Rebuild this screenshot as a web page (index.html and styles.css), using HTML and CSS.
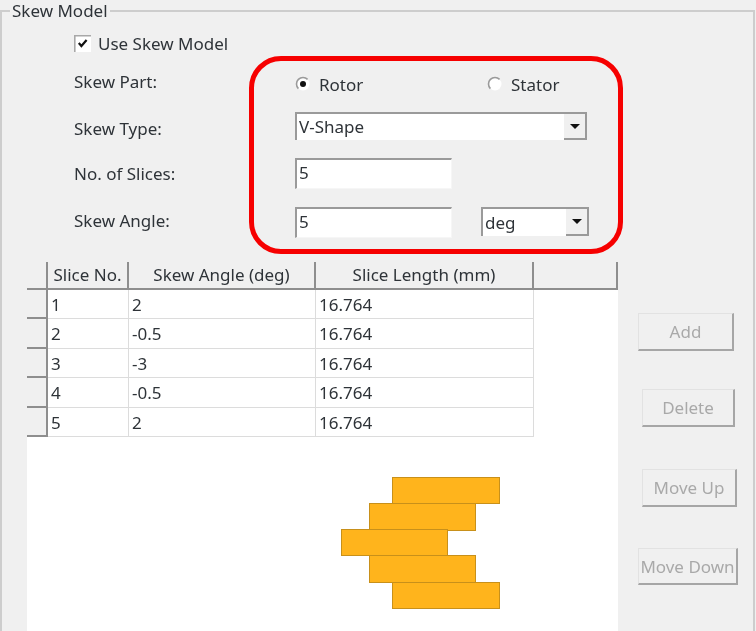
FILE: index.html
```html
<!DOCTYPE html>
<html lang="en">
<head>
<meta charset="utf-8">
<title>Skew Model</title>
<link rel="stylesheet" href="styles.css">
</head>
<body>
<div class="window">
  <fieldset class="group">
    <legend class="group-title">Skew Model</legend>
    <label class="use-skew">
      <svg class="checkbox" width="17" height="17" viewBox="0 0 17 17"><rect x="0" y="0" width="17" height="17" fill="#fff"/><path d="M.8 17V.8H17" fill="none" stroke="#a8a8a8" stroke-width="1.6"/><path d="M4.8 8 7.4 11 12.6 5" fill="none" stroke="#111" stroke-width="2.2"/></svg>
      Use Skew Model
    </label>
    <div class="form">
      <span class="label label-part">Skew Part:</span>
      <div class="radios">
        <span class="radio radio-rotor">
          <svg width="16" height="16" viewBox="0 0 16 16"><circle cx="8" cy="8" r="6.5" fill="#fff"/><path d="M3.4 12.6A6.5 6.5 0 0 1 12.6 3.4" fill="none" stroke="#9a9a9a" stroke-width="1.6"/><circle cx="8" cy="8" r="3" fill="#111"/></svg>
          Rotor
        </span>
        <span class="radio">
          <svg width="16" height="16" viewBox="0 0 16 16"><circle cx="8" cy="8" r="6.5" fill="#fff"/><path d="M3.4 12.6A6.5 6.5 0 0 1 12.6 3.4" fill="none" stroke="#9a9a9a" stroke-width="1.6"/></svg>
          Stator
        </span>
      </div>
      <span class="label label-type">Skew Type:</span>
      <div class="combo combo-wide"><span class="combo-text">V-Shape</span><span class="combo-btn"><i class="arrow"></i></span></div>
      <span class="label label-slices">No. of Slices:</span>
      <div class="input">5</div>
      <span class="label label-angle">Skew Angle:</span>
      <div class="input">5</div>
      <div class="combo combo-unit"><span class="combo-text">deg</span><span class="combo-btn"><i class="arrow"></i></span></div>
    </div>
    <div class="lower">
      <div class="table-area">
        <div class="grid">
          <div class="head"></div>
          <div class="head">Slice No.</div>
          <div class="head">Skew Angle (deg)</div>
          <div class="head">Slice Length (mm)</div>
          <div class="head head-end"></div>

          <div class="row-head"></div><div class="cell">1</div><div class="cell">2</div><div class="cell">16.764</div><div class="blank"></div>
          <div class="row-head"></div><div class="cell">2</div><div class="cell">-0.5</div><div class="cell">16.764</div><div class="blank"></div>
          <div class="row-head"></div><div class="cell">3</div><div class="cell">-3</div><div class="cell">16.764</div><div class="blank"></div>
          <div class="row-head"></div><div class="cell">4</div><div class="cell">-0.5</div><div class="cell">16.764</div><div class="blank"></div>
          <div class="row-head"></div><div class="cell">5</div><div class="cell">2</div><div class="cell">16.764</div><div class="blank"></div>
        </div>
        <svg class="diagram" width="591" height="194" viewBox="0 0 591 194">
          <g fill="#ffb41c" stroke="#c8901a" stroke-width="1">
            <rect x="365.5" y="40.5" width="107" height="26"/>
            <rect x="342.5" y="66.5" width="106" height="27"/>
            <rect x="314.5" y="92.5" width="106" height="26"/>
            <rect x="342.5" y="118.5" width="106" height="27"/>
            <rect x="365.5" y="145.5" width="107" height="26"/>
          </g>
        </svg>
      </div>
      <div class="buttons">
        <div class="btn btn-add">Add</div>
        <div class="btn btn-delete">Delete</div>
        <div class="btn btn-up">Move Up</div>
        <div class="btn btn-down">Move Down</div>
      </div>
    </div>
  </fieldset>
  <div class="highlight"></div>
</div>
</body>
</html>
```
FILE: styles.css
```css
html, body {
  margin: 0;
  padding: 0;
  background: #f0f0f0;
}
.window {
  position: relative;
  width: 756px;
  height: 631px;
  overflow: hidden;
  background: #f0f0f0;
  font-family: "Noto Sans", "Open Sans", sans-serif;
  font-size: 17px;
  color: #2e3338;
  filter: blur(0.45px);
}
.group {
  margin: 1px 1px 0 0;
  padding: 0;
  height: 700px;
  border: 2px solid #cdcdcd;
  border-bottom: none;
  min-width: 0;
  box-sizing: border-box;
}
.group-title {
  margin-left: 8px;
  padding: 0 2px;
  height: 20px;
  line-height: 20px;
}
.use-skew {
  display: flex;
  align-items: center;
  gap: 7px;
  height: 20px;
  margin: 12px 0 0 72px;
}
.checkbox {
  flex: none;
}
.form {
  display: grid;
  grid-template-columns: 221px 157px 29px 108px;
  grid-template-rows: 20px 28px 31px 31px;
  row-gap: 18px;
  margin: 21px 0 0 72px;
  align-items: center;
}
.label {
  grid-column: 1;
  white-space: nowrap;
}
.label-part { position: relative; top: -3px; }
.label-type { position: relative; top: 2px; }
.label-angle { position: relative; top: -2px; }
.radios {
  grid-column: 2 / 5;
  display: flex;
  align-items: center;
}
.radio {
  display: flex;
  align-items: center;
  gap: 8px;
  font-size: 17px;
}
.radio-rotor { width: 192px; }
.input {
  grid-column: 2;
  box-sizing: border-box;
  height: 31px;
  width: 157px;
  background: #fff;
  border-top: 2px solid #9a9a9a;
  border-left: 2px solid #9a9a9a;
  border-right: 1px solid #f6f6f6;
  border-bottom: 1px solid #f6f6f6;
  padding-left: 2px;
  line-height: 26px;
}
.combo {
  box-sizing: border-box;
  display: flex;
  background: #fff;
  border-top: 2px solid #9a9a9a;
  border-left: 2px solid #9a9a9a;
  height: 28px;
}
.combo-wide {
  grid-column: 2 / 5;
  width: 292px;
}
.combo-unit {
  grid-column: 4;
  width: 108px;
  height: 29px;
  align-self: start;
}
.combo-text {
  flex: 1;
  padding-left: 2px;
  line-height: 26px;
}
.combo-unit .combo-text {
  line-height: 28px;
}
.combo-btn {
  flex: none;
  box-sizing: border-box;
  width: 23px;
  background: #f0f0f0;
  border-right: 2px solid #9a9a9a;
  border-bottom: 2px solid #9a9a9a;
  display: flex;
  align-items: center;
  justify-content: center;
}
.arrow {
  width: 0;
  height: 0;
  border-left: 5px solid transparent;
  border-right: 5px solid transparent;
  border-top: 5px solid #111;
}
.lower {
  display: flex;
  margin: 24px 0 0 25px;
  align-items: flex-start;
}
.table-area {
  width: 591px;
  height: 369px;
  background: #fff;
  flex: none;
}
.grid {
  display: grid;
  grid-template-columns: 21px 81px 187px 218px 84px;
  grid-template-rows: 28px repeat(5, 29.4px);
  color: #2e3338;
}
.head, .row-head {
  box-sizing: border-box;
  background: #f0f0f0;
  border-right: 2px solid #8e8e8e;
  border-bottom: 2px solid #8e8e8e;
}
.head {
  text-align: center;
  line-height: 25px;
  white-space: nowrap;
}
.cell {
  box-sizing: border-box;
  background: #fff;
  border-right: 1px solid #dcdcdc;
  border-bottom: 1px solid #dcdcdc;
  padding-left: 3px;
  line-height: 29px;
}
.blank {
  background: #fff;
}
.diagram {
  display: block;
}
.buttons {
  margin: 51px 0 0 20px;
  display: flex;
  flex-direction: column;
  align-items: flex-start;
  flex: none;
}
.btn {
  box-sizing: border-box;
  height: 38px;
  background: #f0f0f0;
  border-top: 1px solid #e2e2e2;
  border-left: 1px solid #e2e2e2;
  border-right: 2px solid #a6a6a6;
  border-bottom: 2px solid #a6a6a6;
  color: #a9a9a9;
  text-align: center;
  line-height: 35px;
  white-space: nowrap;
}
.btn-add { width: 96px; }
.btn-delete { width: 93px; margin: 38px 0 0 4px; }
.btn-up { width: 95px; margin: 42px 0 0 4px; }
.btn-down { width: 100px; margin: 41px 0 0 0; height: 37px; }
.highlight {
  position: absolute;
  left: 249px;
  top: 56px;
  width: 374px;
  height: 198px;
  box-sizing: border-box;
  border: 5px solid #f60000;
  border-radius: 32px;
}
```
